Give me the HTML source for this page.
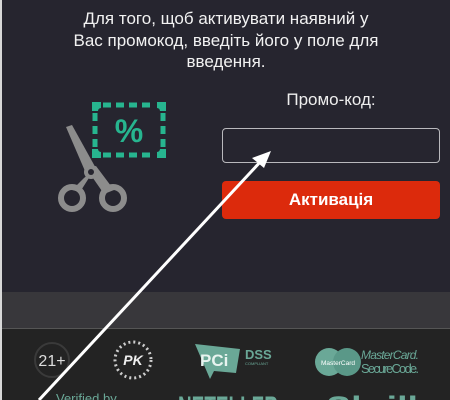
<!DOCTYPE html>
<html><head><meta charset="utf-8"><style>
*{margin:0;padding:0;box-sizing:border-box}
html,body{width:450px;height:400px;overflow:hidden}
body{background:#26252f;font-family:"Liberation Sans",sans-serif;position:relative}
.edge{position:absolute;left:0;top:0;width:2px;height:400px;background:#d8d8d8}
.intro{position:absolute;left:0;top:8px;width:452px;text-align:center;color:#f2f2f2;font-size:17px;line-height:21.5px}
.label{position:absolute;left:222px;width:218px;top:90px;text-align:center;color:#eee;font-size:17px}
.inp{position:absolute;left:222px;top:128px;width:218px;height:35px;border:1.5px solid #b9b9bd;border-radius:4px}
.btn{position:absolute;left:222px;top:181px;width:218px;height:38px;background:#dc2a0c;border-radius:4px;color:#fff;font-weight:bold;font-size:17px;text-align:center;line-height:38px}
.band{position:absolute;left:2px;top:292px;width:448px;height:36px;background:#38373b}
.foot{position:absolute;left:2px;top:328px;width:448px;height:72px;background:#232323;border-top:1px solid #555;overflow:hidden}
svg{display:block;overflow:hidden}
</style></head><body>
<div class="edge"></div>
<div class="intro">Для того, щоб активувати наявний у<br>Вас промокод, введіть його у поле для<br>введення.</div>
<svg style="position:absolute;left:0;top:0" width="200" height="230">
<g fill="none" stroke="#27b58f" stroke-width="5">
<path d="M103 105 H155" stroke-dasharray="8 5"/>
<path d="M103 155 H155" stroke-dasharray="8 5"/>
<path d="M95 113 V148" stroke-dasharray="8 5"/>
<path d="M163 113 V148" stroke-dasharray="8 5"/>
</g>
<g fill="#27b58f"><path d="M92 102 h9 v6 a3 3 0 0 0 -3 3 h-6z"/><path d="M166 102 h-9 v6 a3 3 0 0 1 3 3 h6z"/><path d="M92 158 h9 v-6 a3 3 0 0 1 -3 -3 h-6z"/><path d="M166 158 h-9 v-6 a3 3 0 0 0 3 -3 h6z"/></g>
<text x="129" y="142" font-size="32" font-weight="bold" fill="#27b58f" text-anchor="middle" font-family="Liberation Sans">%</text>
<g fill="#8c8c8c">
<path d="M66 127 L72 125 L98 172 L88 178z"/>
<path d="M86 168 L96 166 L114 190 L104 194z"/>
<path d="M84 178 L94 170 L80 192 L72 190z"/>
<circle cx="91" cy="172" r="7"/>
</g>
<g fill="none" stroke="#8c8c8c" stroke-width="6"><circle cx="72" cy="198" r="11"/><circle cx="113" cy="198" r="11"/></g>
<circle cx="91" cy="172" r="3" fill="#26252f"/>
</svg>
<div class="label">Промо-код:</div>
<div class="inp"></div>
<div class="btn">Активація</div>
<div class="band"></div>
<div class="foot">
<svg style="position:absolute;left:0;top:0" width="448" height="71">
<circle cx="50" cy="31" r="17" fill="none" stroke="#3a3a3a" stroke-width="2"/>
<text x="50" y="37" font-size="16" fill="#ddd" text-anchor="middle" font-family="Liberation Sans">21+</text>
<circle cx="131" cy="31" r="18" fill="none" stroke="#ccc" stroke-width="3" stroke-dasharray="2 3"/>
<text x="131" y="36" font-size="14" font-weight="bold" font-style="italic" fill="#eee" text-anchor="middle" font-family="Liberation Sans">PK</text>
<path d="M193 15 L238 20 L234 44 L212 42 L208 50z" fill="#6aa897"/>
<text x="198" y="37" font-size="17" font-weight="bold" fill="#e8f4f0" font-family="Liberation Sans">PCi</text>
<text x="243" y="30" font-size="13" font-weight="bold" fill="#6aa897" font-family="Liberation Sans">DSS</text>
<text x="243" y="36" font-size="4" fill="#6aa897" font-family="Liberation Sans">COMPLIANT</text>
<circle cx="327" cy="33" r="14" fill="#6aa897"/><circle cx="345" cy="33" r="14" fill="#5a9888"/>
<text x="336" y="36" font-size="6.5" fill="#fff" text-anchor="middle" font-family="Liberation Sans">MasterCard</text>
<text x="359" y="30" font-size="12" font-style="italic" fill="#6aa897" font-family="Liberation Sans" textLength="58">MasterCard.</text>
<text x="359" y="44" font-size="13" fill="#6aa897" font-family="Liberation Sans" textLength="58">SecureCode.</text>
<text x="54" y="74" font-size="13" fill="#6aa897" font-family="Liberation Sans">Verified by</text>
<text x="176" y="88" font-size="30" font-weight="bold" fill="#6aa897" font-family="Liberation Sans" textLength="100" lengthAdjust="spacingAndGlyphs">NETELLER</text>
<text x="324" y="90" font-size="32" font-weight="bold" fill="#6aa897" font-family="Liberation Sans" textLength="92" lengthAdjust="spacingAndGlyphs">Skrill</text>
</svg>
</div>
<svg style="position:absolute;left:0;top:0" width="450" height="400">
<line x1="39" y1="400" x2="262" y2="160" stroke="#fff" stroke-width="3"/>
<path d="M271 151 L252 158 L264 168z" fill="#fff"/>
</svg>
</body></html>
